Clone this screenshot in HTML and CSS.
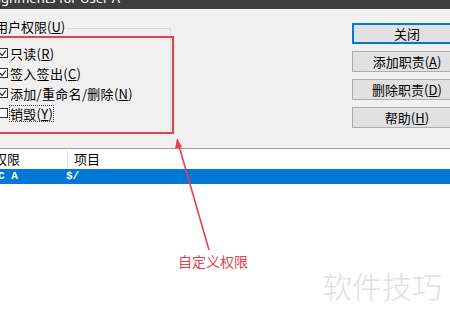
FILE: index.html
```html
<!DOCTYPE html>
<html lang="zh-CN">
<head>
  <meta charset="UTF-8" />
  <title>Assignments for User A</title>
  <link rel="stylesheet" href="styles.css">
</head>
<body>
  <div class="window">
    <div class="titlebar"><span class="title-text">Assignments for User A</span></div>

    <div class="panel">
      <!-- 用户权限 group -->
      <div class="perm-group">
        <div class="group-title">用户权限(<u>U</u>)</div>
        <div class="check-list">
          <div class="check-row">
            <span class="box"><svg viewBox="0 0 8 8" width="8" height="8"><polyline points="1,4 3,6.5 7,1.5" fill="none" stroke="#222" stroke-width="1.2"/></svg></span>
            <span class="check-label">只读(<u>R</u>)</span>
          </div>
          <div class="check-row">
            <span class="box"><svg viewBox="0 0 8 8" width="8" height="8"><polyline points="1,4 3,6.5 7,1.5" fill="none" stroke="#222" stroke-width="1.2"/></svg></span>
            <span class="check-label">签入签出(<u>C</u>)</span>
          </div>
          <div class="check-row">
            <span class="box"><svg viewBox="0 0 8 8" width="8" height="8"><polyline points="1,4 3,6.5 7,1.5" fill="none" stroke="#222" stroke-width="1.2"/></svg></span>
            <span class="check-label">添加/重命名/删除(<u>N</u>)</span>
          </div>
          <div class="check-row">
            <span class="box"></span>
            <span class="check-label focused">销毁(<u>Y</u>)</span>
          </div>
        </div>
      </div>

      <!-- buttons -->
      <div class="actions">
        <button class="btn btn-default">关闭</button>
        <button class="btn">添加职责(<u>A</u>)</button>
        <button class="btn">删除职责(<u>D</u>)</button>
        <button class="btn">帮助(<u>H</u>)</button>
      </div>
    </div>

    <div class="list">
      <div class="list-head">
        <div class="col-perm">权限</div>
        <div class="col-item">项目</div>
      </div>
      <div class="list-row">
        <div class="cell-perm">C A</div>
        <div class="cell-item">$/</div>
      </div>
    </div>
  </div>

  <!-- annotation drawn over the screenshot -->
  <div class="annot-box"></div>
  <svg class="annot-arrow" width="450" height="318" viewBox="0 0 450 318">
    <line x1="209" y1="250" x2="179" y2="146" stroke="#e8414b" stroke-width="1.6"/>
    <polygon points="177,138 175,149 182,147" fill="#e8414b"/>
  </svg>
  <div class="annot-label">自定义权限</div>

  <div class="watermark">软件技巧</div>
</body>
</html>
```

FILE: styles.css
```css
:root {
  --dialog-bg: #f0f0f0;
  --title-bg: #3e3e3e;
  --btn-bg: #e1e1e1;
  --btn-border: #adadad;
  --select-blue: #0078d7;
  --annot-red: #e8414b;
  --font-ui: "Noto Sans CJK SC", "Noto Sans", sans-serif;
}

body {
  margin: 0;
  width: 450px;
  height: 318px;
  overflow: hidden;
  position: relative;
  background: #fff;
  font-family: var(--font-ui);
  color: #000;
}

.window {
  width: 490px;
  margin-left: -20px;
}

.titlebar {
  height: 9px;
  overflow: hidden;
  background: var(--title-bg);
  color: #fff;
  font-family: "Noto Sans", sans-serif;
  font-size: 13px;
  line-height: 16px;
}

.title-text {
  display: block;
  margin: -10px 0 0 -3px;
  white-space: nowrap;
}

.panel {
  height: 139px;
  display: flex;
  background: var(--dialog-bg);
}

.perm-group {
  width: 187px;
  height: 106px;
  margin: 19px 0 0 4px;
  border: 1px solid #dcdcdc;
  box-sizing: border-box;
}

.group-title {
  width: fit-content;
  height: 18px;
  margin: -11px 0 0 9px;
  padding: 0 1px;
  background: var(--dialog-bg);
  font-size: 13px;
  line-height: 18px;
  white-space: nowrap;
}

.check-list {
  margin-top: 7px;
  padding-left: 13px;
}

.check-row {
  height: 20px;
  display: flex;
  align-items: center;
  font-size: 13px;
  white-space: nowrap;
}

.box {
  width: 8px;
  height: 8px;
  border: 1px solid #333;
  background: #fff;
  margin-right: 2px;
  display: flex;
}

.check-label {
  line-height: 15px;
  letter-spacing: 0.3px;
}

.check-label.focused {
  outline: 1px dotted #444;
}

.actions {
  width: 110px;
  margin: 14px 8px 0 auto;
  display: flex;
  flex-direction: column;
  gap: 7px;
}

.btn {
  height: 21px;
  padding: 0;
  background: var(--btn-bg);
  border: 1px solid var(--btn-border);
  font-family: var(--font-ui);
  font-size: 13px;
  line-height: 18px;
  color: #000;
}

.btn-default {
  border-color: var(--select-blue);
  box-shadow: inset 0 0 0 1px var(--select-blue);
}

.list {
  border-top: 1px solid #a0a0a0;
  padding-top: 1px;
  background: #fff;
}

.list-head {
  display: flex;
  height: 18px;
  font-size: 13px;
  line-height: 18px;
  margin-bottom: 1px;
}

.col-perm {
  width: 88px;
  padding-left: 14px;
  box-sizing: border-box;
  border-right: 1px solid #e3e3e3;
}

.col-item {
  padding-left: 6px;
}

.list-row {
  display: flex;
  height: 15px;
  background: var(--select-blue);
  color: #fff;
  font-family: "Liberation Mono", monospace;
  font-size: 11px;
  font-weight: bold;
  line-height: 15px;
}

.cell-perm {
  width: 86px;
  padding-left: 18px;
  box-sizing: border-box;
  white-space: pre;
}

/* annotation overlay */
.annot-box {
  position: absolute;
  left: -6px;
  top: 36px;
  width: 176px;
  height: 94px;
  border: 2px solid var(--annot-red);
}

.annot-arrow {
  position: absolute;
  left: 0;
  top: 0;
}

.annot-label {
  position: absolute;
  left: 178px;
  top: 251px;
  font-size: 14px;
  line-height: 20px;
  color: var(--annot-red);
}

.watermark {
  position: absolute;
  left: 322px;
  top: 265px;
  font-size: 30px;
  line-height: 40px;
  font-weight: 300;
  color: #e0e0e0;
  white-space: nowrap;
}
```
